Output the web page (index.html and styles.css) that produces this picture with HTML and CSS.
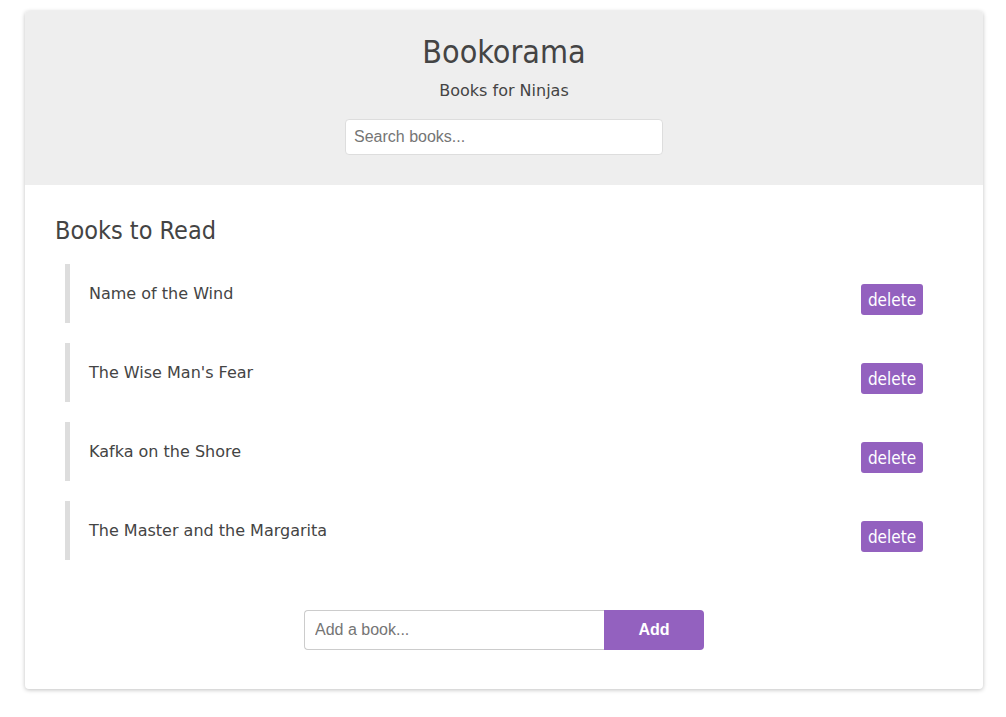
FILE: index.html
```html
<!DOCTYPE html>
<html>
<head>
<meta charset="utf-8">
<title>Bookorama</title>
<link rel="stylesheet" href="styles.css">
</head>
<body>
<div class="wrapper">
  <div class="card">
    <header class="header">
      <h1 class="title">Bookorama</h1>
      <p class="subtitle">Books for Ninjas</p>
      <input class="search" type="text" placeholder="Search books...">
    </header>
    <section class="content">
      <h2 class="heading">Books to Read</h2>
      <ul class="book-list">
        <li class="book"><span class="book-name">Name of the Wind</span><button class="delete">delete</button></li>
        <li class="book"><span class="book-name">The Wise Man's Fear</span><button class="delete">delete</button></li>
        <li class="book"><span class="book-name">Kafka on the Shore</span><button class="delete">delete</button></li>
        <li class="book"><span class="book-name">The Master and the Margarita</span><button class="delete">delete</button></li>
      </ul>
      <form class="add-form">
        <input class="add-input" type="text" placeholder="Add a book...">
        <button class="add-btn" type="button">Add</button>
      </form>
    </section>
  </div>
</div>
</body>
</html>
```
FILE: styles.css
```css
* { box-sizing: border-box; }
html, body { margin: 0; padding: 0; background: #fff; }
body {
  font-family: "DejaVu Sans", Verdana, sans-serif;
  color: #444;
}
.wrapper {
  padding: 11px 23px 28px 25px;
}
.card {
  width: 958px;
  height: 678px;
  border-radius: 4px;
  box-shadow: 0 1px 4px rgba(0,0,0,0.25);
  overflow: hidden;
  background: #fff;
}
.header {
  background: #eee;
  height: 174px;
  padding-top: 22px;
  display: flex;
  flex-direction: column;
  align-items: center;
}
.title {
  margin: 0;
  font-family: "DejaVu Sans Condensed", "DejaVu Sans", sans-serif;
  font-weight: normal;
  font-size: 32px;
  line-height: 38px;
  color: #444;
}
.subtitle {
  margin: 10px 0 0;
  font-size: 16px;
  line-height: 20px;
  color: #444;
}
.search {
  margin-top: 18px;
  width: 318px;
  height: 36px;
  border: 1px solid #ddd;
  border-radius: 4px;
  background: #fff;
  padding: 0 8px;
  font-family: "Liberation Sans", Arial, sans-serif;
  font-size: 16px;
  color: #444;
  outline: none;
}
.search::placeholder, .add-input::placeholder { color: #757575; }
.content {
  padding: 30px 30px 0;
}
.heading {
  margin: 0;
  font-family: "DejaVu Sans Condensed", "DejaVu Sans", sans-serif;
  font-weight: normal;
  font-size: 25px;
  line-height: 32px;
  color: #444;
}
.book-list {
  list-style: none;
  margin: 17px 30px 0 10px;
  padding: 0;
  display: flex;
  flex-direction: column;
  gap: 20px;
}
.book {
  height: 59px;
  border-left: 5px solid #ddd;
  padding: 0 0 0 19px;
  display: flex;
  justify-content: space-between;
  align-items: center;
}
.book-name {
  font-size: 16px;
  line-height: 20px;
  color: #444;
}
.delete {
  margin-top: 12px;
  width: 62px;
  height: 31px;
  border: none;
  border-radius: 3px;
  background: #9361bf;
  color: #fff;
  font-family: "DejaVu Sans Condensed", "DejaVu Sans", sans-serif;
  font-size: 17px;
  padding: 0;
  cursor: pointer;
}
.add-form {
  margin-top: 50px;
  display: flex;
  justify-content: center;
}
.add-input {
  width: 300px;
  height: 40px;
  border: 1px solid #ccc;
  border-right: none;
  border-radius: 4px 0 0 4px;
  padding: 0 10px;
  font-family: "Liberation Sans", Arial, sans-serif;
  font-size: 16px;
  color: #444;
  outline: none;
}
.add-btn {
  width: 100px;
  height: 40px;
  border: none;
  border-radius: 0 4px 4px 0;
  background: #9361bf;
  color: #fff;
  font-family: "Liberation Sans", Arial, sans-serif;
  font-weight: bold;
  font-size: 16px;
  cursor: pointer;
}
```
